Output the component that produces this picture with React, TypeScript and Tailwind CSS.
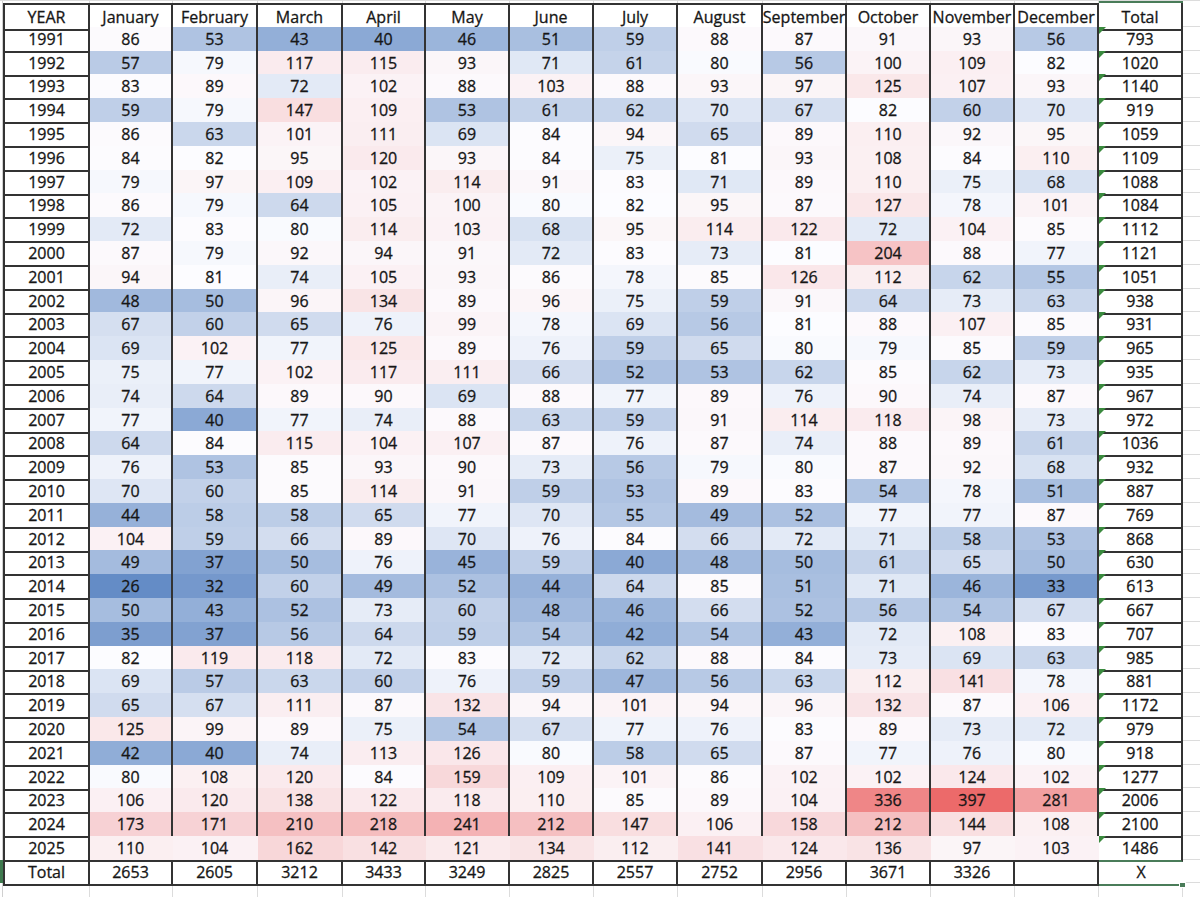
import React from 'react';

const MONTHS = [
  'January', 'February', 'March', 'April', 'May', 'June',
  'July', 'August', 'September', 'October', 'November', 'December',
];

// year, 12 monthly values, total
const DATA: [number, number[], number][] = [
  [1991, [86, 53, 43, 40, 46, 51, 59, 88, 87, 91, 93, 56], 793],
  [1992, [57, 79, 117, 115, 93, 71, 61, 80, 56, 100, 109, 82], 1020],
  [1993, [83, 89, 72, 102, 88, 103, 88, 93, 97, 125, 107, 93], 1140],
  [1994, [59, 79, 147, 109, 53, 61, 62, 70, 67, 82, 60, 70], 919],
  [1995, [86, 63, 101, 111, 69, 84, 94, 65, 89, 110, 92, 95], 1059],
  [1996, [84, 82, 95, 120, 93, 84, 75, 81, 93, 108, 84, 110], 1109],
  [1997, [79, 97, 109, 102, 114, 91, 83, 71, 89, 110, 75, 68], 1088],
  [1998, [86, 79, 64, 105, 100, 80, 82, 95, 87, 127, 78, 101], 1084],
  [1999, [72, 83, 80, 114, 103, 68, 95, 114, 122, 72, 104, 85], 1112],
  [2000, [87, 79, 92, 94, 91, 72, 83, 73, 81, 204, 88, 77], 1121],
  [2001, [94, 81, 74, 105, 93, 86, 78, 85, 126, 112, 62, 55], 1051],
  [2002, [48, 50, 96, 134, 89, 96, 75, 59, 91, 64, 73, 63], 938],
  [2003, [67, 60, 65, 76, 99, 78, 69, 56, 81, 88, 107, 85], 931],
  [2004, [69, 102, 77, 125, 89, 76, 59, 65, 80, 79, 85, 59], 965],
  [2005, [75, 77, 102, 117, 111, 66, 52, 53, 62, 85, 62, 73], 935],
  [2006, [74, 64, 89, 90, 69, 88, 77, 89, 76, 90, 74, 87], 967],
  [2007, [77, 40, 77, 74, 88, 63, 59, 91, 114, 118, 98, 73], 972],
  [2008, [64, 84, 115, 104, 107, 87, 76, 87, 74, 88, 89, 61], 1036],
  [2009, [76, 53, 85, 93, 90, 73, 56, 79, 80, 87, 92, 68], 932],
  [2010, [70, 60, 85, 114, 91, 59, 53, 89, 83, 54, 78, 51], 887],
  [2011, [44, 58, 58, 65, 77, 70, 55, 49, 52, 77, 77, 87], 769],
  [2012, [104, 59, 66, 89, 70, 76, 84, 66, 72, 71, 58, 53], 868],
  [2013, [49, 37, 50, 76, 45, 59, 40, 48, 50, 61, 65, 50], 630],
  [2014, [26, 32, 60, 49, 52, 44, 64, 85, 51, 71, 46, 33], 613],
  [2015, [50, 43, 52, 73, 60, 48, 46, 66, 52, 56, 54, 67], 667],
  [2016, [35, 37, 56, 64, 59, 54, 42, 54, 43, 72, 108, 83], 707],
  [2017, [82, 119, 118, 72, 83, 72, 62, 88, 84, 73, 69, 63], 985],
  [2018, [69, 57, 63, 60, 76, 59, 47, 56, 63, 112, 141, 78], 881],
  [2019, [65, 67, 111, 87, 132, 94, 101, 94, 96, 132, 87, 106], 1172],
  [2020, [125, 99, 89, 75, 54, 67, 77, 76, 83, 89, 73, 72], 979],
  [2021, [42, 40, 74, 113, 126, 80, 58, 65, 87, 77, 76, 80], 918],
  [2022, [80, 108, 120, 84, 159, 109, 101, 86, 102, 102, 124, 102], 1277],
  [2023, [106, 120, 138, 122, 118, 110, 85, 89, 104, 336, 397, 281], 2006],
  [2024, [173, 171, 210, 218, 241, 212, 147, 106, 158, 212, 144, 108], 2100],
  [2025, [110, 104, 162, 142, 121, 134, 112, 141, 124, 136, 97, 103], 1486],
];

const TOTALS = [2653, 2605, 3212, 3433, 3249, 2825, 2557, 2752, 2956, 3671, 3326];

// 3-colour scale like Excel: low blue, median white, high red
const all = DATA.flatMap(([, v]) => v).sort((a, b) => a - b);
const MIN = all[0];
const MAX = all[all.length - 1];
const MID = (all[all.length / 2 - 1] + all[all.length / 2]) / 2;
const BLUE = [100, 140, 198];
const WHITE = [252, 252, 255];
const RED = [236, 106, 106];

const mix = (a: number[], b: number[], t: number) =>
  `rgb(${a.map((c, i) => Math.round(c + (b[i] - c) * t)).join(',')})`;

const heat = (v: number) =>
  v <= MID ? mix(BLUE, WHITE, (v - MIN) / (MID - MIN)) : mix(WHITE, RED, (v - MID) / (MAX - MID));

const COLS = 'grid w-[1180px] grid-cols-[87px_83px_85px_85px_83px_84px_84px_84px_85px_84px_84px_84px_84px_84px]';
const CELL = 'relative flex items-center justify-center border-b-2 border-r-2 border-[#333333]';

const Flag = () => (
  <svg className="absolute left-0 top-0" width="7" height="7" viewBox="0 0 7 7">
    <polygon points="0,0 7,0 0,7" fill="#3a8a3e" />
  </svg>
);

export default function App() {
  return (
    <div
      className="relative flex h-[897px] w-[1200px] flex-col overflow-hidden bg-white text-[16px] text-[#161616] [-webkit-text-stroke:0.3px_#161616]"
      style={{ fontFamily: '"Open Sans", "Liberation Sans", sans-serif' }}
    >
      {/* gridline strip above the table */}
      <div className="flex h-[3px] border-t border-[#dcdcdc]">
        <div className="w-[3px] border-r border-[#d0d0d0]" />
        <div className={COLS}>
          {Array.from({ length: 14 }).map((_, i) => (
            <div key={i} className={i === 13 ? 'bg-[#4a7c59]' : 'border-r border-[#dcdcdc]'} />
          ))}
        </div>
        <div className="flex-1" />
      </div>

      {/* header */}
      <div className="flex h-[23.8px]">
        <div className="w-[3px] border-r border-[#d0d0d0]" />
        <div className={COLS}>
          <div className={`${CELL} border-l-2 border-t-2`}>YEAR</div>
          {MONTHS.map((m) => (
            <div key={m} className={`${CELL} border-t-2`}>{m}</div>
          ))}
          <div className={`${CELL} pt-[2px]`}>Total</div>
        </div>
        <div className="flex-1 border-b border-[#dcdcdc]" />
      </div>

      {/* years */}
      {DATA.map(([year, vals, total]) => {
        const last = year === 2025;
        return (
          <div key={year} className="flex h-[23.8px]">
            <div className="w-[3px] border-r border-[#d0d0d0]" />
            <div className={COLS}>
              <div className={`${CELL} border-l-2`}>{year}</div>
              {vals.map((v, i) => (
                <div
                  key={i}
                  className={`${CELL} ${last ? 'border-r-transparent' : ''}`}
                  style={{ backgroundColor: heat(v) }}
                >
                  {v}
                </div>
              ))}
              <div className={`${CELL} ${last ? 'border-b-[#4a7c59]' : ''}`}>
                <Flag />
                {total}
              </div>
            </div>
            <div className="flex-1 border-b border-[#dcdcdc]" />
          </div>
        );
      })}

      {/* totals row */}
      <div className="flex h-[23.8px]">
        <div className="w-[3px] bg-[#3f7a4f]" />
        <div className={COLS}>
          <div className={`${CELL} border-l-2`}>Total</div>
          {TOTALS.map((t, i) => (
            <div key={i} className={CELL}>{t}</div>
          ))}
          <div className={`${CELL} border-r-0`} />
          <div className="flex items-center justify-center border-b-2 border-[#4a7c59]">X</div>
        </div>
        <div className="flex-1 border-b border-[#dcdcdc]" />
      </div>

      {/* empty sheet below */}
      <div className="flex flex-1">
        <div className="w-[3px] border-r border-[#d0d0d0]" />
        <div className={COLS}>
          {Array.from({ length: 14 }).map((_, i) => (
            <div key={i} className="border-r border-[#dcdcdc]" />
          ))}
        </div>
        <div className="flex-1" />
      </div>

      {/* fill handle of the selected cell */}
      <div className="absolute left-[1179px] top-[882px] h-[6px] w-[7px] border border-white bg-[#4a7c59]" />
    </div>
  );
}
